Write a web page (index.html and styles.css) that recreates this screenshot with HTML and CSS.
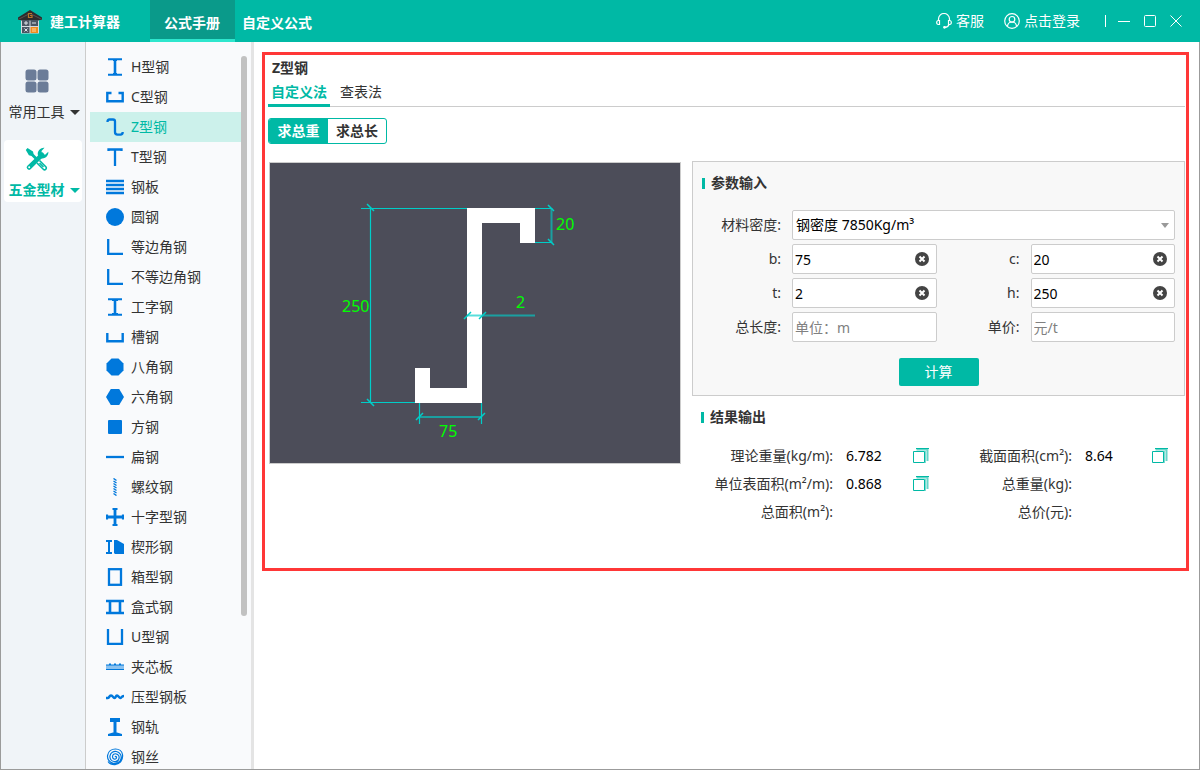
FILE: index.html
```html
<!DOCTYPE html>
<html lang="zh-CN">
<head>
<meta charset="utf-8">
<meta name="viewport" content="width=device-width, initial-scale=1">
<title>建工计算器</title>
<link rel="stylesheet" href="styles.css">
</head>
<body>
<div class="app">
  <header class="topbar">
    <div class="brand">
      <svg class="brand-logo" width="24" height="24" viewBox="0 0 24 24" aria-hidden="true">
        <path d="M3 9h18v14.500H3z" fill="#d5dbe0"/>
        <path d="M12 0 24 7.500V10H0V7.500z" fill="#2d2a2b"/>
        <path d="M0 9.500 12 3.500 24 9.500" fill="none" stroke="#55504d" stroke-width="1"/>
        <path d="M3 9h18v1.500H3z" fill="#2d2a2b"/>
        <path d="M14 3.500h-3.500v4H14v-2h-2" fill="none" stroke="#b8742a" stroke-width="1.200"/>
        <path d="M4 10h7.500v6H4zM12.500 10H20v6h-7.500zM4 17h7.500v6H4z" fill="#4a5663"/>
        <path d="M12.500 17H20v6h-7.500z" fill="#f08c1e"/>
        <path d="M6 13h4M8 11v4M14 13h4M6.500 18.500l3 3M9.500 18.500l-3 3" stroke="#dfe5ea" stroke-width="1"/>
        <path d="M14 19h4M14 21h4" stroke="#ffd9a3" stroke-width="1"/>
      </svg>
      <span class="brand-name">建工计算器</span>
    </div>
    <nav class="topnav">
      <a class="topnav-link is-active" href="#manual">公式手册</a>
      <a class="topnav-link" href="#custom">自定义公式</a>
    </nav>
    <div class="account">
      <a class="account-link" href="#service">
        <svg width="16" height="16" viewBox="0 0 16 16" fill="none" stroke="#fff" stroke-width="1.200" aria-hidden="true">
          <path d="M2.500 8V6a5.500 5.500 0 0 1 11 0v2"/>
          <path d="M3.500 7.500v4H2.300A1.800 1.800 0 0 1 .7 9.500c0-1.100.7-2 1.800-2zM12.500 7.500v4h1.200a1.800 1.800 0 0 0 1.600-2c0-1.100-.7-2-1.800-2zM13 11.500c-.5 1.800-1.800 2.700-4 2.900"/>
          <circle cx="8.500" cy="14.300" r=".8" fill="#fff"/>
        </svg>
        <span>客服</span>
      </a>
      <a class="account-link" href="#login">
        <svg width="16" height="16" viewBox="0 0 16 16" fill="none" stroke="#fff" stroke-width="1.200" aria-hidden="true">
          <circle cx="8" cy="8" r="7.300"/><circle cx="8" cy="6.300" r="2.800"/>
          <path d="M3.500 13c.4-2.600 2-4 4.500-4s4.100 1.400 4.500 4"/>
        </svg>
        <span>点击登录</span>
      </a>
    </div>
    <div class="window-controls">
      <button class="window-btn" type="button" aria-label="最小化"><svg width="12" height="12" viewBox="0 0 12 12"><path d="M0 6.500h12" stroke="#fff"/></svg></button>
      <button class="window-btn" type="button" aria-label="最大化"><svg width="12" height="12" viewBox="0 0 12 12"><rect x=".5" y=".5" width="11" height="11" rx="1" fill="none" stroke="#fff"/></svg></button>
      <button class="window-btn" type="button" aria-label="关闭"><svg width="12" height="12" viewBox="0 0 12 12"><path d="M.5.5l11 11M11.500.5l-11 11" stroke="#fff"/></svg></button>
    </div>
  </header>

  <div class="workspace">
    <aside class="rail">
      <button class="rail-item" type="button">
        <svg width="24" height="24" viewBox="0 0 24 24" fill="#6b7c98" aria-hidden="true">
          <rect x=".5" y=".5" width="11" height="11" rx="2.500"/><rect x="12.500" y=".5" width="11" height="11" rx="2.500"/>
          <rect x=".5" y="12.500" width="11" height="11" rx="2.500"/><rect x="12.500" y="12.500" width="11" height="11" rx="2.500"/>
        </svg>
        <span class="rail-label">常用工具<i class="caret"></i></span>
      </button>
      <button class="rail-item is-active" type="button">
        <svg width="24" height="24" viewBox="0 0 24 24" aria-hidden="true">
          <path d="M2.500 1 8 4.500l.6 2.600 3.400 3.400-2 2-3.500-3.600-2.600-.6L.8 3z" fill="#00b9a5"/>
          <path d="M14.500 13.500l6.300 6.300a1.700 1.700 0 0 1-2.500 2.500L12 16" fill="none" stroke="#00b9a5" stroke-width="1.600"/>
          <path d="M14.500 16l4 4" stroke="#00b9a5" stroke-width="1.400"/>
          <path d="M4 20.500 17 7.800" stroke="#00b9a5" stroke-width="4.600" stroke-linecap="round"/>
          <path d="M19.500.8A6 6 0 0 0 13 8.500l2.700 2.700A6 6 0 0 0 23.300 4.700l-3.200 3.100-3-.7-.6-3z" fill="#00b9a5"/>
          <circle cx="4.200" cy="20.300" r="1" fill="#fff"/>
        </svg>
        <span class="rail-label">五金型材<i class="caret"></i></span>
      </button>
    </aside>

    <nav class="catalog" aria-label="型材列表">
      <ul class="catalog-list">
        <li><a class="catalog-link" href="#h"><svg class="ico" viewBox="0 0 18 18"><path d="M2 1.300h14M2 16.700h14" stroke-width="2"/><path d="M9 1v16" stroke-width="2.600"/><path d="M7 2.500h4M7 15.500h4" stroke-width="1"/></svg>H型钢</a></li>
        <li><a class="catalog-link" href="#c"><svg class="ico" viewBox="0 0 18 18"><path d="M5.500 5H1.300v8.200h15.400V5h-4.200" stroke-width="2.400"/></svg>C型钢</a></li>
        <li><a class="catalog-link is-active" href="#z"><svg class="ico" viewBox="0 0 18 18"><path d="M1.500 4c0-1.800.8-2.500 2-2.500H7c1.400 0 2 .7 2 2v10.500c0 1.800.8 2.600 2.500 2.600h3c1.500 0 2.200-.8 2.200-2.600" stroke-width="2.300"/></svg>Z型钢</a></li>
        <li><a class="catalog-link" href="#t"><svg class="ico" viewBox="0 0 18 18"><path d="M2.500 3V1.500h13V3M9 1.500V18" stroke-width="2.300"/></svg>T型钢</a></li>
        <li><a class="catalog-link" href="#plate"><svg class="ico" viewBox="0 0 18 18"><path d="M0 3h18M0 7h18M0 11h18M0 15h18" stroke-width="2.600"/></svg>钢板</a></li>
        <li><a class="catalog-link" href="#round"><svg class="ico" viewBox="0 0 18 18"><circle class="solid" cx="9" cy="9" r="9"/></svg>圆钢</a></li>
        <li><a class="catalog-link" href="#angle"><svg class="ico" viewBox="0 0 18 18"><path d="M2.200 1v14.800H17" stroke-width="2.300"/></svg>等边角钢</a></li>
        <li><a class="catalog-link" href="#uangle"><svg class="ico" viewBox="0 0 18 18"><path d="M2.200 1v14.800H17" stroke-width="2.300"/></svg>不等边角钢</a></li>
        <li><a class="catalog-link" href="#i"><svg class="ico" viewBox="0 0 18 18"><path d="M2 1.300h14M2 16.700h14" stroke-width="2"/><path d="M9 1v16" stroke-width="2.600"/><path d="M6 2.500h6M6 15.500h6" stroke-width="1"/></svg>工字钢</a></li>
        <li><a class="catalog-link" href="#channel"><svg class="ico" viewBox="0 0 18 18"><path d="M1.300 5v8.200h15.400V5" stroke-width="2.400"/></svg>槽钢</a></li>
        <li><a class="catalog-link" href="#oct"><svg class="ico" viewBox="0 0 18 18"><path class="solid" d="M5.500.5h7l5 5v7l-5 5h-7l-5-5v-7z"/></svg>八角钢</a></li>
        <li><a class="catalog-link" href="#hex"><svg class="ico" viewBox="0 0 18 18"><path class="solid" d="M4.800 1h8.400L18 9l-4.800 8H4.800L0 9z"/></svg>六角钢</a></li>
        <li><a class="catalog-link" href="#square"><svg class="ico" viewBox="0 0 18 18"><rect class="solid" x="2" y="2" width="14" height="14" rx="1"/></svg>方钢</a></li>
        <li><a class="catalog-link" href="#flat"><svg class="ico" viewBox="0 0 18 18"><path d="M0 9h18" stroke-width="2.300"/></svg>扁钢</a></li>
        <li><a class="catalog-link" href="#thread"><svg class="ico" viewBox="0 0 18 18"><path d="M7.500.5l3 2M7.500 3l3 2M7.500 5.500l3 2M7.500 8l3 2M7.500 10.500l3 2M7.500 13l3 2M7.500 15.500l3 2" stroke-width="1.400"/></svg>螺纹钢</a></li>
        <li><a class="catalog-link" href="#cross"><svg class="ico" viewBox="0 0 18 18"><path d="M0 9h18M9 0v18" stroke-width="2.800"/><path d="M6.500 1h5M6.500 17h5M1 6.500v5M17 6.500v5" stroke-width="2.200"/></svg>十字型钢</a></li>
        <li><a class="catalog-link" href="#wedge"><svg class="ico" viewBox="0 0 18 18"><path d="M0 3h6M0 15h6M3 3v12" stroke-width="2"/><path class="solid" d="M8 2h3l7 4v10H9l-1-1z"/></svg>楔形钢</a></li>
        <li><a class="catalog-link" href="#box"><svg class="ico" viewBox="0 0 18 18"><rect x="3" y="1.200" width="12" height="15.600" stroke-width="2.300"/></svg>箱型钢</a></li>
        <li><a class="catalog-link" href="#case"><svg class="ico" viewBox="0 0 18 18"><path d="M0 3h18M0 15h18M4 3v12M14 3v12" stroke-width="2.600"/></svg>盒式钢</a></li>
        <li><a class="catalog-link" href="#u"><svg class="ico" viewBox="0 0 18 18"><path d="M2 1v14.800h14V1" stroke-width="2.300"/></svg>U型钢</a></li>
        <li><a class="catalog-link" href="#sandwich"><svg class="ico" viewBox="0 0 18 18"><path d="M0 9h18" stroke="#8cc2ef" stroke-width="4"/><path d="M0 7h18M0 11.500h18M3 6h2M8 6h2M13 6h2" stroke-width="1.200"/></svg>夹芯板</a></li>
        <li><a class="catalog-link" href="#profiled"><svg class="ico" viewBox="0 0 18 18"><path d="M0 10h2c1.500 0 1-2.500 3-2.500S7 10 8.500 10 9.500 7.500 11 7.500 13 10 14.500 10 15 8 18 8" stroke-width="2.500"/></svg>压型钢板</a></li>
        <li><a class="catalog-link" href="#railway"><svg class="ico" viewBox="0 0 18 18"><path d="M4 2h10" stroke-width="4"/><path d="M9 2v14" stroke-width="3"/><path class="solid" d="M7 14.500h4L16 16v2H2v-2z"/></svg>钢轨</a></li>
        <li><a class="catalog-link" href="#wire"><svg class="ico" viewBox="0 0 18 18"><path d="M9 9c1-1.500 2 .2 1.200 1.400C9 12 6.500 11 6.500 8.800 6.500 6.500 8.500 5.500 10 5.800c2.500.4 3.500 2.600 3 4.700-.6 2.300-2.700 3.500-5 3C5 13 3.500 10.500 4 7.800 4.500 4.800 7.500 2.800 10.500 3.500c3.500.8 5.300 4 4.500 7.300-.9 3.500-4.300 5.200-7.700 4.500C3.500 14.500 1 11 1.600 7.300 2.200 3.500 5.500 1 9.500 1c3.500 0 6.500 2.300 7 5.500.8 5-2.500 9.700-7.500 10.200-3 .2-5.500-1-7-3.200" stroke-width="1.200"/></svg>钢丝</a></li>
      </ul>
      <div class="catalog-scroll"><div class="catalog-thumb"></div></div>
    </nav>

    <main class="content">
      <section class="panel">
        <h1 class="panel-title">Z型钢</h1>
        <nav class="tabs">
          <a class="tab is-active" href="#custom-method">自定义法</a>
          <a class="tab" href="#table-method">查表法</a>
        </nav>
        <div class="modes">
          <button class="mode is-active" type="button">求总重</button>
          <button class="mode" type="button">求总长</button>
        </div>
        <div class="columns">
          <div class="drawing">
            <svg class="drawing-svg" viewBox="0 0 410 300" role="img" aria-label="Z型钢截面图">
              <path d="M197 45h68v35h-15V60h-38v180h-67v-35h15v20h37z" fill="#fff"/>
              <g fill="none" stroke="#00cdc8">
                <path d="M91 45.500h106M91 239.500h54M100.500 45v195M265 45.500h17M265 79.500h17M149.500 240v21M211.500 240v21" stroke-width="1.200"/>
                <path d="M281.500 45v35M149 254h63M197 152.500h68" stroke-width="2" stroke-opacity=".65"/>
                <path d="M97 41l7 7M97 236l7 7M278 42l6 6M278 76l6 6M146 257l7-7M208 257l7-7M194 156l7-7M209 156l7-7" stroke-width="1.500"/>
              </g>
              <g class="dimension">
                <text x="286" y="67">20</text>
                <text x="72" y="149">250</text>
                <text x="246" y="145">2</text>
                <text x="169" y="274">75</text>
              </g>
            </svg>
          </div>

          <div class="calc">
            <form class="params">
              <h2 class="section-title">参数输入</h2>
              <div class="fields">
                <label class="field-label" for="density">材料密度:</label>
                <div class="control control-wide">
                  <select class="control-input" id="density"><option>钢密度 7850Kg/m³</option></select>
                  <i class="select-arrow"></i>
                </div>
                <label class="field-label" for="b">b:</label>
                <div class="control">
                  <input class="control-input" id="b" type="text" value="75">
                  <button class="clear" type="button" aria-label="清除"><svg width="14" height="14" viewBox="0 0 14 14"><circle cx="7" cy="7" r="7" fill="#444"/><path d="M4.500 4.500l5 5M9.500 4.500l-5 5" stroke="#fff" stroke-width="2"/></svg></button>
                </div>
                <label class="field-label" for="c">c:</label>
                <div class="control">
                  <input class="control-input" id="c" type="text" value="20">
                  <button class="clear" type="button" aria-label="清除"><svg width="14" height="14" viewBox="0 0 14 14"><circle cx="7" cy="7" r="7" fill="#444"/><path d="M4.500 4.500l5 5M9.500 4.500l-5 5" stroke="#fff" stroke-width="2"/></svg></button>
                </div>
                <label class="field-label" for="t">t:</label>
                <div class="control">
                  <input class="control-input" id="t" type="text" value="2">
                  <button class="clear" type="button" aria-label="清除"><svg width="14" height="14" viewBox="0 0 14 14"><circle cx="7" cy="7" r="7" fill="#444"/><path d="M4.500 4.500l5 5M9.500 4.500l-5 5" stroke="#fff" stroke-width="2"/></svg></button>
                </div>
                <label class="field-label" for="h">h:</label>
                <div class="control">
                  <input class="control-input" id="h" type="text" value="250">
                  <button class="clear" type="button" aria-label="清除"><svg width="14" height="14" viewBox="0 0 14 14"><circle cx="7" cy="7" r="7" fill="#444"/><path d="M4.500 4.500l5 5M9.500 4.500l-5 5" stroke="#fff" stroke-width="2"/></svg></button>
                </div>
                <label class="field-label" for="length">总长度:</label>
                <div class="control"><input class="control-input" id="length" type="text" placeholder="单位：m"></div>
                <label class="field-label" for="price">单价:</label>
                <div class="control"><input class="control-input" id="price" type="text" placeholder="元/t"></div>
              </div>
              <button class="submit" type="button">计算</button>
            </form>

            <section class="results">
              <h2 class="section-title">结果输出</h2>
              <div class="result-grid">
                <span class="result-label">理论重量(kg/m):</span><output class="result-value">6.782</output>
                <button class="copy" type="button" aria-label="复制"><svg width="16" height="16" viewBox="0 0 16 16" fill="none" stroke="#00b9a5"><path d="M3.500 1.500h11V13" stroke-width="2" opacity=".6"/><path d="M3 .5h13"/><path d="M12.500 3v12" opacity=".5"/><path d="M.5 3.500h11v11H.5z"/></svg></button>
                <span class="result-label">截面面积(cm²):</span><output class="result-value">8.64</output>
                <button class="copy" type="button" aria-label="复制"><svg width="16" height="16" viewBox="0 0 16 16" fill="none" stroke="#00b9a5"><path d="M3.500 1.500h11V13" stroke-width="2" opacity=".6"/><path d="M3 .5h13"/><path d="M12.500 3v12" opacity=".5"/><path d="M.5 3.500h11v11H.5z"/></svg></button>
                <span class="result-label">单位表面积(m²/m):</span><output class="result-value">0.868</output>
                <button class="copy" type="button" aria-label="复制"><svg width="16" height="16" viewBox="0 0 16 16" fill="none" stroke="#00b9a5"><path d="M3.500 1.500h11V13" stroke-width="2" opacity=".6"/><path d="M3 .5h13"/><path d="M12.500 3v12" opacity=".5"/><path d="M.5 3.500h11v11H.5z"/></svg></button>
                <span class="result-label">总重量(kg):</span><output class="result-value"></output><span></span>
                <span class="result-label">总面积(m²):</span><output class="result-value"></output><span></span>
                <span class="result-label">总价(元):</span><output class="result-value"></output><span></span>
              </div>
            </section>
          </div>
        </div>
      </section>
    </main>
  </div>
</div>
</body>
</html>
```
FILE: styles.css
```css
*, *::before, *::after { box-sizing: border-box; }

body {
  margin: 0;
  color: #333;
  background: #fff;
  font: 14px/20px "Noto Sans", "Noto Sans CJK SC", sans-serif;
}

a { color: inherit; text-decoration: none; }
button, input, select { font: inherit; color: inherit; }
button { padding: 0; border: 0; background: none; cursor: pointer; }
svg { display: block; flex: none; }

.app { display: flex; flex-direction: column; height: 100vh; }

/* Top bar */
.topbar { display: flex; flex: none; height: 42px; color: #fff; background: #00b9a5; }
.brand { display: flex; align-items: center; gap: 8px; width: 150px; padding-left: 18px; padding-top: 1px; }
.brand-name { font-weight: 700; }
.topnav { display: flex; flex: 1; }
.topnav-link {
  padding: 13px 7px 6px;
  border-bottom: 3px solid transparent;
  font-weight: 700;
}
.topnav-link.is-active { padding-left: 14px; padding-right: 15px; border-color: #2ee6cd; background: #0a9a8a; }
.account { display: flex; align-items: center; gap: 20px; }
.account-link { display: flex; align-items: center; gap: 4px; }
.window-controls {
  display: flex;
  align-self: center;
  gap: 14px;
  margin-left: 25px;
  padding: 0 18px 0 12px;
  border-left: 1px solid #fff;
}

/* Frame below the bar */
.workspace {
  display: flex;
  flex: 1;
  min-height: 0;
  border: 1px solid #9b9b9b;
  border-top: 0;
}

.rail { width: 85px; flex: none; padding: 20px 3px; border-right: 1px solid #ccc; background: #f0f4f8; }
.rail-item {
  display: flex;
  flex-direction: column;
  align-items: center;
  gap: 9px;
  width: 78px;
  height: 62px;
  margin-bottom: 16px;
  padding-top: 7px;
  padding-right: 12px;
  border-radius: 4px;
}
.rail-item + .rail-item { margin-bottom: 0; }
.rail-item.is-active { color: #00b9a5; background: #fff; font-weight: 700; }
.rail-label { display: flex; align-items: center; gap: 5px; margin-right: -14px; white-space: nowrap; }
.caret { border: 5px solid transparent; border-top-color: currentColor; border-bottom: 0; }

.catalog {
  display: flex;
  width: 168px;
  flex: none;
  padding: 10px 4px 0;
  overflow: hidden;
  border-right: 3px solid #e4e4e4;
  background: #f9fafc;
}
.catalog-list { flex: 1; margin: 0; padding: 0; list-style: none; }
.catalog-link { display: flex; align-items: center; gap: 7px; height: 30px; padding-left: 16px; }
.catalog-link.is-active { color: #00b9a5; background: #ccf1eb; }
.catalog-scroll { width: 6px; padding-top: 4px; }
.catalog-thumb { height: 78.5%; border-radius: 3px; background: #c1c1c1; }
.ico { width: 18px; height: 18px; fill: none; stroke: #0078dc; }
.ico .solid { fill: #0078dc; stroke: none; }

/* Content */
.content { flex: 1; min-width: 0; padding: 10px 10px 10px 8px; overflow: auto; }
.panel { padding: 3px 1px 42px 3px; border: 3px solid #ff3737; }
.panel-title { margin: 0; padding-left: 4px; font-size: 14px; line-height: 20px; font-weight: 700; }

.tabs { display: flex; gap: 8px; margin-top: 4px; border-bottom: 1px solid #ccc; }
.tab { margin-bottom: -1px; padding: 0 2px 2px; border-bottom: 3px solid transparent; }
.tab.is-active { padding-left: 3px; padding-right: 3px; color: #00b9a5; border-color: #00b9a5; font-weight: 700; }

.modes {
  display: flex;
  width: max-content;
  margin: 11px 0 17px;
  overflow: hidden;
  border: 1px solid #00b9a5;
  border-radius: 3px;
}
.mode { width: 58px; height: 24px; font-weight: 700; }
.mode.is-active { width: 59px; color: #fff; background: #00b9a5; }

.columns { display: grid; grid-template-columns: 412px minmax(0, 1fr); gap: 11px; align-items: start; padding-left: 1px; }
.drawing { margin-top: 1px; border: 1px solid #ccc; background: #4c4d59; }
.drawing-svg { width: 100%; }
.dimension { fill: #0f0; font-size: 16px; }

.params { padding: 11px 9px 9px; border: 1px solid #ccc; background: #f8f8f8; }
.section-title {
  display: flex;
  align-items: center;
  gap: 6px;
  margin: 0;
  font-size: 14px;
  line-height: 20px;
  font-weight: 700;
}
.section-title::before { content: ""; width: 3px; height: 11px; background: #00b9a5; }

.fields {
  display: grid;
  grid-template-columns: 80px minmax(0, 1fr) 74px minmax(0, 1fr);
  gap: 4px 10px;
  margin-top: 17px;
}
.field-label { align-self: center; padding-right: 1px; text-align: right; }
.control {
  display: flex;
  align-items: center;
  height: 30px;
  border: 1px solid #ccc;
  border-radius: 2px;
  background: #fff;
}
.control-wide { grid-column: 2 / -1; }
.control-input {
  flex: 1;
  min-width: 0;
  height: 28px;
  padding: 0 2px;
  border: 0;
  outline: 0;
  color: #000;
  background: none;
  appearance: none;
}
.control-wide .control-input { padding: 0 3px; }
.control-input::placeholder { color: #808080; opacity: 1; }
.select-arrow { margin-right: 5px; border: 4px solid transparent; border-top: 5px solid #999; border-bottom: 0; }
.clear { margin-right: 7px; }
.submit {
  display: block;
  width: 80px;
  height: 28px;
  margin: 16px auto 0;
  border-radius: 2px;
  color: #fff;
  background: #00b9a5;
}

.results { padding-top: 11px; }
.results .section-title { padding-left: 9px; }
.result-grid {
  display: grid;
  grid-template-columns: 141px minmax(0, 1fr) 16px 130px minmax(0, 1fr) 16px;
  grid-auto-rows: 28px;
  column-gap: 13px;
  align-items: center;
  margin-top: 15px;
  padding-right: 17px;
}
.result-label { text-align: right; white-space: nowrap; }
.result-value { color: #000; }
```
